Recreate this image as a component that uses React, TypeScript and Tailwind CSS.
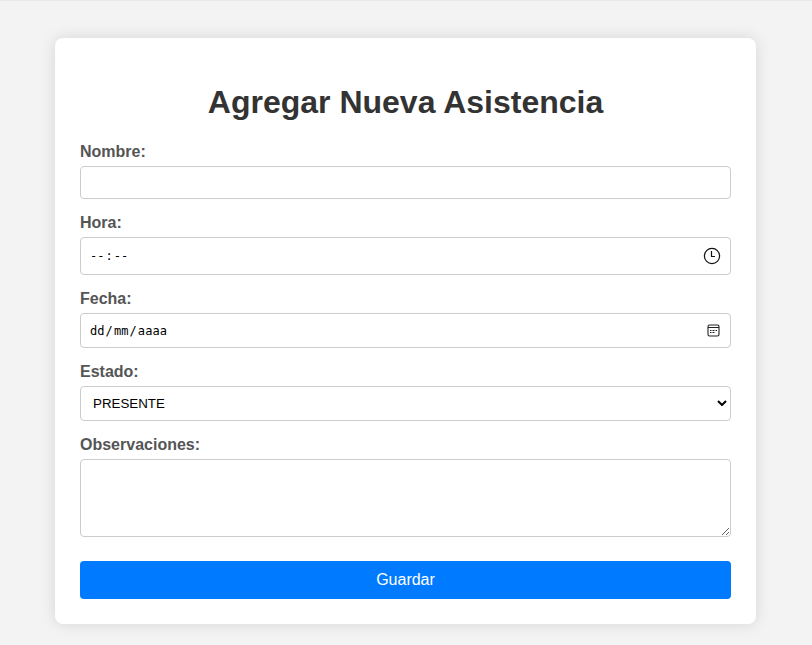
export default function App() {
  const label = "block pt-px text-[16px] leading-[18px] font-bold text-[#555] mb-[5px]";
  const box = "w-full rounded-[4px] border border-[#ccc] bg-white";
  const value = "font-['DejaVu_Sans_Mono',monospace] text-[12px] text-black";
  return (
    <div className="h-[645px] border-t border-[#e8e8e8] bg-[#f3f3f3] pl-[55px] pt-[37px] font-['Liberation_Sans',Arial,sans-serif]">
      <form className="h-[586px] w-[701px] rounded-[8px] bg-white px-[25px] pt-[46px] shadow-[0_0_15px_rgba(0,0,0,0.12)]">
        <h1 className="h-[58px] text-center text-[32px] leading-[37px] font-bold text-[#333]">Agregar Nueva Asistencia</h1>
        <div className="h-[71px]">
          <label className={label}>Nombre:</label>
          <div className={`${box} h-[33px]`} />
        </div>
        <div className="h-[76px]">
          <label className={label}>Hora:</label>
          <div className={`${box} flex h-[38px] items-center justify-between pr-[9px] pl-[9px]`}>
            <span className={value}>--<span className="mx-px">:</span>--</span>
            <svg width="18" height="18" viewBox="0 0 18 18" fill="none" stroke="#111" strokeWidth="1.2"><circle cx="9" cy="9" r="7.6" /><path d="M8.5 4V9.5H12" /></svg>
          </div>
        </div>
        <div className="h-[73px]">
          <label className={label}>Fecha:</label>
          <div className={`${box} flex h-[35px] items-center justify-between pr-[10px] pl-[9px]`}>
            <span className={`${value} tracking-[0.08px]`}>dd<span className="mx-px">/</span>mm<span className="mx-px">/</span>aaaa</span>
            <svg width="13" height="13" viewBox="0 0 13 13" fill="none" stroke="#222"><rect x="1" y="1" width="11" height="11" rx="1.5" strokeWidth="1.1" /><path d="M1 3.5H12" /><path d="M3 6.5H4.5M5.5 6.5H7.5M8.5 6.5H10M3 8.5H4.5M5.5 8.5H7.5" strokeWidth="1.2" /></svg>
          </div>
        </div>
        <div className="h-[73px]">
          <label className={label}>Estado:</label>
          <div className={`${box} flex h-[35px] items-center justify-between pr-[3px] pl-[12px]`}>
            <span className="text-[13.333px] text-black">PRESENTE</span>
            <svg className="mb-px" width="10" height="6" viewBox="0 0 10 6" fill="none" stroke="black" strokeWidth="2"><path d="M1 1L5 5L9 1" /></svg>
          </div>
        </div>
        <div className="h-[126px]">
          <label className={label}>Observaciones:</label>
          <textarea className={`${box} block h-[78px] resize-y`} />
        </div>
        <button type="button" className="block h-[38px] w-full rounded-[4px] bg-[#007bff] text-[16px] text-white">Guardar</button>
      </form>
    </div>
  );
}
